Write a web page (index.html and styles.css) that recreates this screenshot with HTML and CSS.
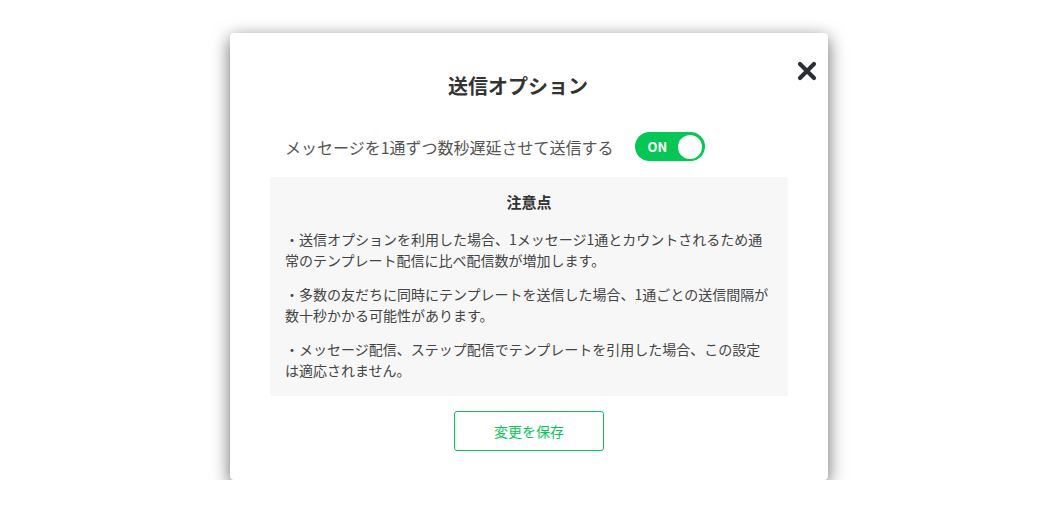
FILE: index.html
```html
<!DOCTYPE html>
<html lang="ja">
<head>
    <meta charset="UTF-8">
    <title>送信オプション</title>
    <link rel="stylesheet" href="styles.css">
</head>
<body>
    <div class="modal">
        <button class="close" aria-label="閉じる">
            <svg width="20" height="20" viewBox="0 0 20 20">
                <path d="M3 3 L17 17 M17 3 L3 17" stroke="#2b2f33" stroke-width="4.2" stroke-linecap="round" fill="none"/>
            </svg>
        </button>

        <h2 class="title">送信オプション</h2>

        <div class="option-row">
            <span class="option-label">メッセージを1通ずつ数秒遅延させて送信する</span>
            <div class="toggle">
                <span class="toggle-text">ON</span>
                <span class="toggle-knob"></span>
            </div>
        </div>

        <!-- 注意点 -->
        <div class="notes">
            <h3>注意点</h3>
            <p>・送信オプションを利用した場合、1メッセージ1通とカウントされるため通常のテンプレート配信に比べ配信数が増加します。</p>
            <p>・多数の友だちに同時にテンプレートを送信した場合、1通ごとの送信間隔が数十秒かかる可能性があります。</p>
            <p>・メッセージ配信、ステップ配信でテンプレートを引用した場合、この設定は適応されません。</p>
        </div>

        <div class="actions">
            <button class="save">変更を保存</button>
        </div>
    </div>
</body>
</html>
```

FILE: styles.css
```css
body {
    margin: 0;
    background-color: #ffffff;
    font-family: "Noto Sans CJK JP", "Noto Sans", sans-serif;
    color: #333333;
}
.modal {
    position: relative;
    width: 598px;
    box-sizing: border-box;
    margin: 33px 0 0 230px;
    padding: 38px 40px 29px;
    background-color: #ffffff;
    border-radius: 4px;
    box-shadow: 0 5px 18px rgba(0, 0, 0, 0.6);
}
.close {
    position: absolute;
    top: 28px;
    right: 11px;
    padding: 0;
    border: none;
    background: none;
    cursor: pointer;
    line-height: 0;
}
.title {
    margin: 0;
    padding-right: 22px;
    font-size: 20px;
    line-height: 30px;
    font-weight: bold;
    text-align: center;
    color: #333333;
}
.option-row {
    display: flex;
    align-items: center;
    margin-top: 31px;
    padding-left: 15px;
}
.option-label {
    font-size: 16px;
    color: #555555;
    line-height: 24px;
}
.toggle {
    position: relative;
    width: 70px;
    height: 29px;
    margin-left: 21px;
    border-radius: 15px;
    background-color: #06c755;
}
.toggle-text {
    position: absolute;
    left: 13px;
    top: 0;
    font-size: 13px;
    line-height: 29px;
    font-weight: bold;
    color: #ffffff;
}
.toggle-knob {
    position: absolute;
    right: 3px;
    top: 2.5px;
    width: 24px;
    height: 24px;
    border-radius: 50%;
    background-color: #ffffff;
}
.notes {
    margin-top: 16px;
    padding: 14px 15px 15px 15px;
    background-color: #f7f7f7;
    border-radius: 3px;
}
.notes h3 {
    margin: 0 0 16px;
    font-size: 15px;
    line-height: 22px;
    font-weight: bold;
    text-align: center;
    color: #333333;
}
.notes p {
    margin: 0 0 13px;
    font-size: 14px;
    line-height: 21px;
    color: #444444;
}
.notes p:last-child {
    margin-bottom: 0;
}
.actions {
    margin-top: 15px;
    text-align: center;
}
.save {
    width: 150px;
    height: 40px;
    border: 1px solid #06c755;
    border-radius: 3px;
    background-color: #ffffff;
    color: #06c755;
    font-family: inherit;
    font-size: 14px;
    cursor: pointer;
}
```
